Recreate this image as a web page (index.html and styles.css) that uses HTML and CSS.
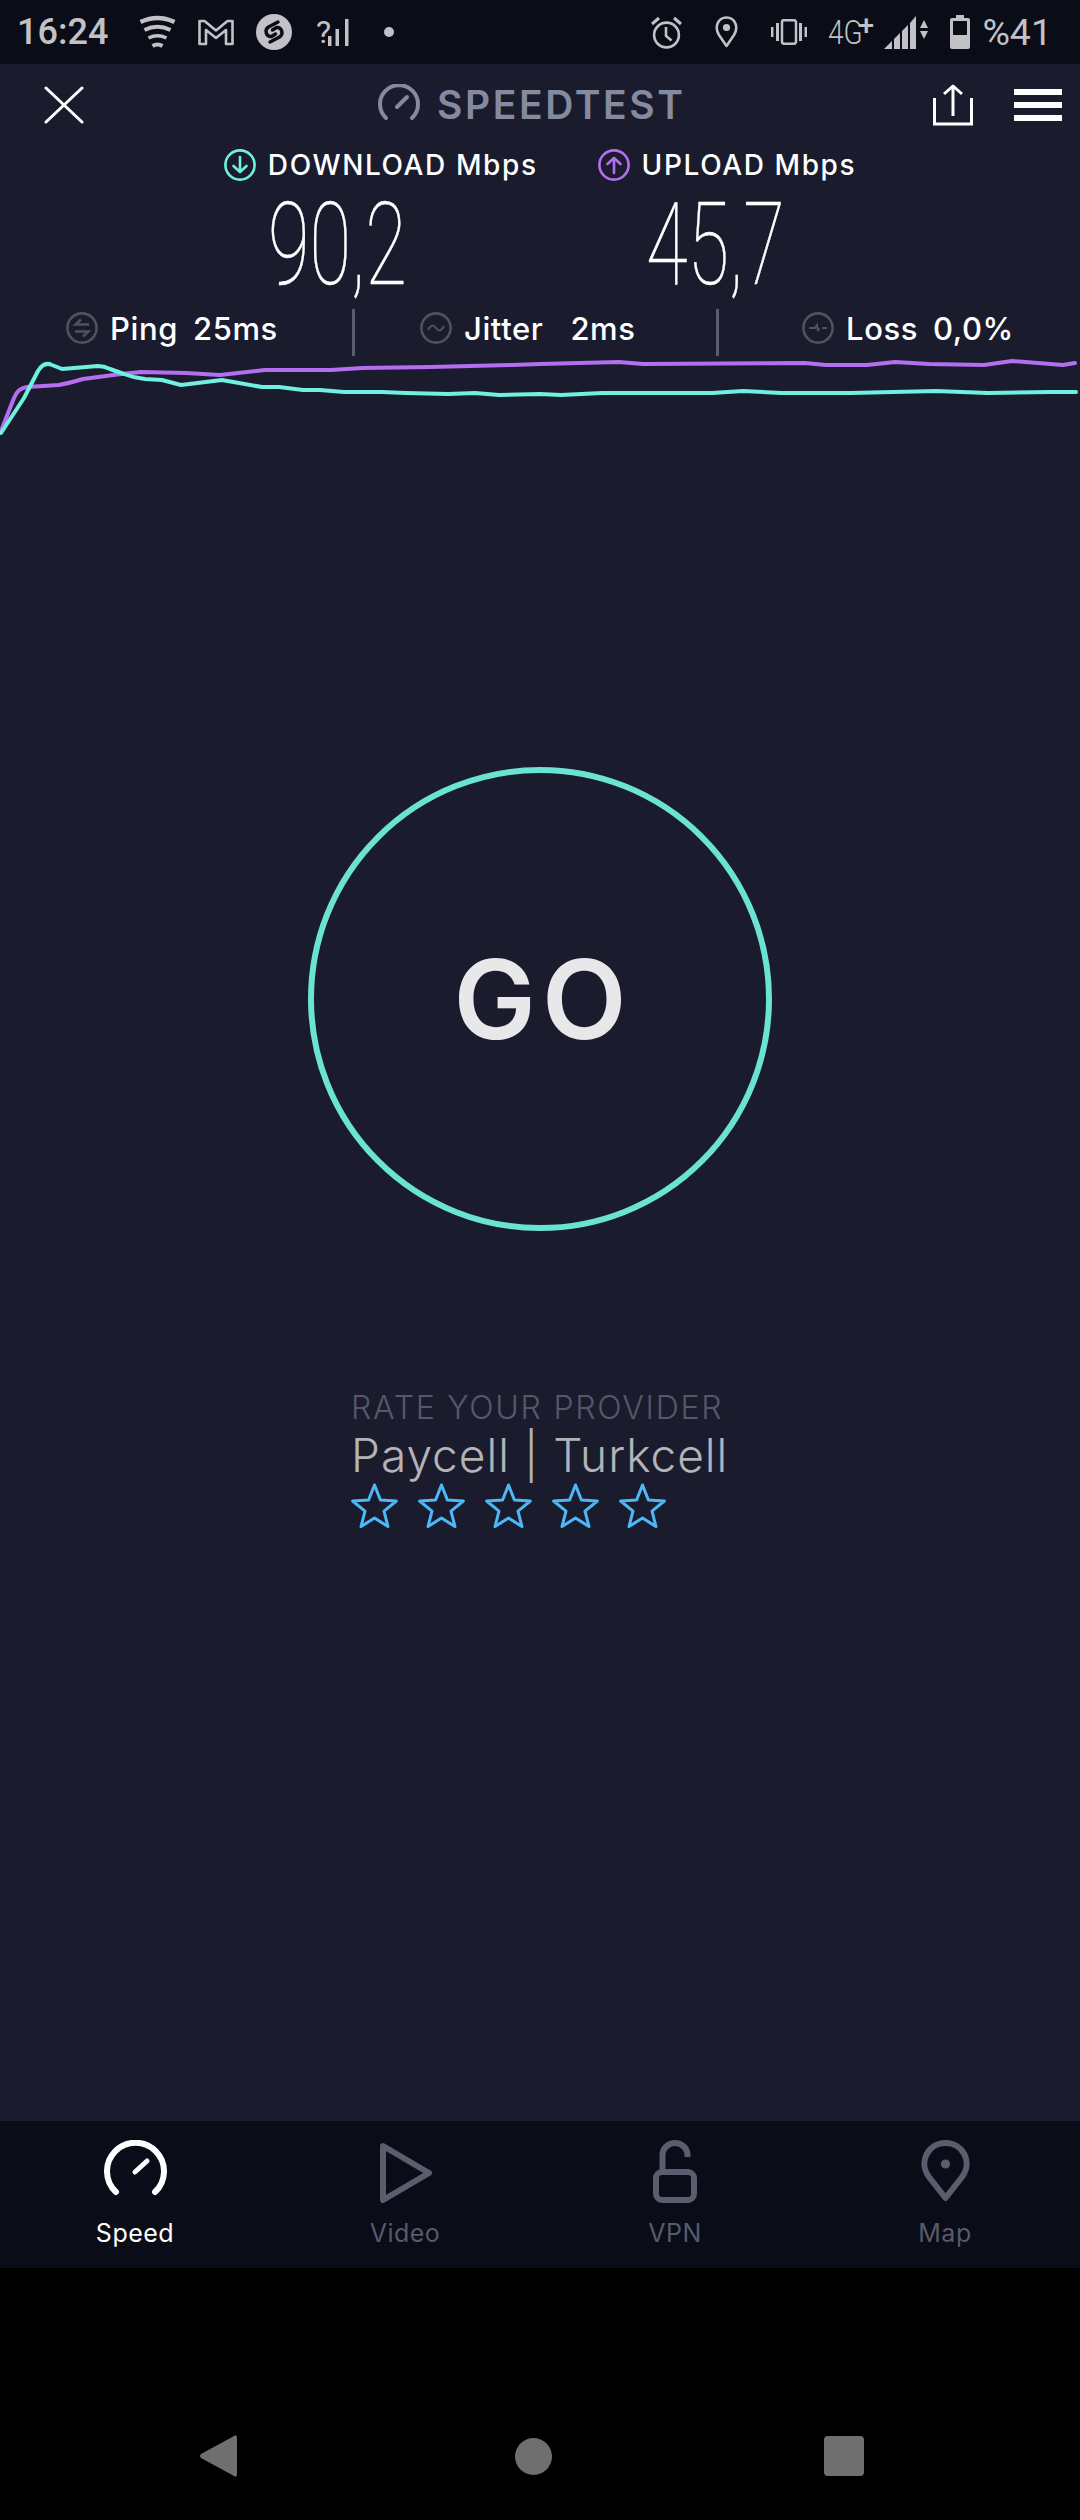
FILE: index.html
```html
<!DOCTYPE html>
<html lang="en">

<head>
  <meta charset="UTF-8" />
  <meta name="viewport" content="width=device-width, initial-scale=1.0" />
  <title>Speedtest</title>
  <link rel="stylesheet" href="styles.css">
</head>

<body>

  <svg class="defs" width="0" height="0">
    <symbol id="star" viewBox="0 0 47 46">
      <polygon points="23.5,2 29.4,17 45.4,18 33,28.1 37,43.6 23.5,35 10,43.6 14,28.1 1.6,18 17.6,17" fill="none" stroke="#4db8f7" stroke-width="3" stroke-linejoin="round" />
    </symbol>
  </svg>

  <div class="status-bar">
    <div class="status-left">
      <span class="clock">16:24</span>
      <svg class="wifi" width="37" height="35" viewBox="0 0 37 35" fill="none" stroke="#c2c2c6" stroke-linecap="butt">
        <path d="M1.5 7 Q18.5 -1 35.5 7" stroke-width="4.5" />
        <path d="M5.5 15 Q18.5 8.5 31.5 15" stroke-width="4" />
        <path d="M9.5 23 Q18.5 18.5 27.5 23" stroke-width="3.5" />
        <path d="M13.5 31 Q18.5 28 23.5 31" stroke-width="4" />
      </svg>
      <svg class="mail" width="36" height="27" viewBox="0 0 36 27" fill="none" stroke="#c2c2c6" stroke-width="2.6" stroke-linejoin="round">
        <path d="M1.5 2 H6.5 L18 11.5 L29.5 2 H34.5 V25 H28 V11 L18 19 L8 11 V25 H1.5 Z" />
      </svg>
      <svg class="shazam" width="36" height="36" viewBox="0 0 36 36" fill="none">
        <circle cx="18" cy="18" r="18" fill="#c2c2c6" />
        <path d="M22 8 L12.5 13 C8 16 10 23 15.5 22.5 L19.5 20 M14 28 L23.5 23 C28 20 26 13 20.5 13.5 L16.5 16" stroke="#0a0c17" stroke-width="3.4" stroke-linecap="round" />
      </svg>
      <span class="no-signal">
        <span class="no-signal-mark">?</span>
        <svg width="22" height="27" viewBox="0 0 22 27" fill="#c2c2c6">
          <rect x="1" y="17" width="3.5" height="10" />
          <rect x="8.5" y="10" width="3.5" height="17" />
          <rect x="18" y="0" width="3.5" height="27" />
        </svg>
      </span>
      <span class="dot"></span>
    </div>
    <div class="status-right">
      <svg class="alarm" width="31" height="33" viewBox="0 0 31 33" fill="none" stroke="#c2c2c6" stroke-width="2.6">
        <circle cx="15.5" cy="19" r="12.4" />
        <path d="M15 11 V20 L20.5 24.5" />
        <path d="M1 8 L8 2 M30 8 L23 2" stroke-width="3" />
      </svg>
      <svg class="place" width="23" height="32" viewBox="0 0 23 32" fill="none" stroke="#c2c2c6" stroke-width="2.6">
        <path d="M11.5 30 L4 19 C-1 11 3 1.5 11.5 1.5 C20 1.5 24 11 19 19 Z" stroke-linejoin="round" />
        <circle cx="11.5" cy="11.5" r="3.6" fill="#c2c2c6" stroke="none" />
      </svg>
      <svg class="vibrate" width="36" height="26" viewBox="0 0 36 26" fill="#c2c2c6">
        <rect x="11" y="1.2" width="14" height="23.6" rx="2" fill="none" stroke="#c2c2c6" stroke-width="2.5" />
        <rect x="0" y="8" width="2.5" height="10" />
        <rect x="5" y="4" width="3" height="18" />
        <rect x="28" y="4" width="3" height="18" />
        <rect x="33.5" y="8" width="2.5" height="10" />
      </svg>
      <span class="network"><span class="network-text">4G</span><span class="network-plus">+</span></span>
      <svg class="signal" width="45" height="33" viewBox="0 0 45 33" fill="#c2c2c6">
        <polygon points="0,33 8,25 8,33" />
        <polygon points="10,23 16,17 16,33 10,33" />
        <polygon points="18,15 24,9 24,33 18,33" />
        <polygon points="26,7 32,0 32,33 26,33" />
        <polygon points="36,12 40,4 44,12" />
        <polygon points="36,15 44,15 40,23" />
      </svg>
      <svg class="battery" width="20" height="34" viewBox="0 0 20 34" fill="none">
        <path d="M6 0 H14 V3 H18 Q20 3 20 5 V32 Q20 34 18 34 H2 Q0 34 0 32 V5 Q0 3 2 3 H6 Z" fill="#c2c2c6" />
        <rect x="3" y="6" width="14" height="14" fill="#0a0c17" />
      </svg>
      <span class="percent">%41</span>
    </div>
  </div>

  <div class="app">
    <div class="top-bar">
      <svg class="close" width="40" height="38" viewBox="0 0 40 38" fill="none" stroke="#fff" stroke-width="3" stroke-linecap="round">
        <path d="M2 2 L38 36 M38 2 L2 36" />
      </svg>
      <div class="brand">
        <svg width="42" height="36" viewBox="0 0 42 36" fill="none" stroke="#868a9f" stroke-width="4" stroke-linecap="round">
          <path d="M8 34 A19 19 0 1 1 34 34" />
          <path d="M19 23 L29 13" />
        </svg>
        <span class="brand-name">SPEEDTEST</span>
      </div>
      <div class="top-actions">
        <svg class="share" width="40" height="42" viewBox="0 0 40 42" fill="none" stroke="#fff" stroke-width="3">
          <path d="M1.5 14 V40 H38.5 V14" />
          <path d="M20 32 V2 M11 10 L20 2 L29 10" stroke-linejoin="round" />
        </svg>
        <div class="menu"><span></span><span></span><span></span></div>
      </div>
    </div>

    <div class="speed-labels">
      <div class="speed-label">
        <svg width="32" height="32" viewBox="0 0 32 32" fill="none" stroke="#6ff0e0" stroke-width="2.6" stroke-linecap="round" stroke-linejoin="round">
          <circle cx="16" cy="16" r="14.6" />
          <path d="M16 8 V23 M9.5 17 L16 23 L22.5 17" />
        </svg>
        <span>DOWNLOAD Mbps</span>
      </div>
      <div class="speed-label">
        <svg width="32" height="32" viewBox="0 0 32 32" fill="none" stroke="#b46ef0" stroke-width="2.6" stroke-linecap="round" stroke-linejoin="round">
          <circle cx="16" cy="16" r="14.6" />
          <path d="M16 24 V9 M9.5 15 L16 9 L22.5 15" />
        </svg>
        <span>UPLOAD Mbps</span>
      </div>
    </div>

    <div class="speed-values">
      <span class="speed-value">90,2</span>
      <span class="speed-value">45,7</span>
    </div>

    <div class="stats">
      <div class="stat stat-ping">
        <svg width="32" height="32" viewBox="0 0 32 32" fill="none" stroke="#50525f" stroke-width="2.6">
          <circle cx="16" cy="16" r="14.6" />
          <path d="M23 12.5 H9.5 L15 7.5 M9 19.5 H22.5 L17 24.5" stroke-width="2.4" />
        </svg>
        <span class="stat-name">Ping</span>
        <span>25ms</span>
      </div>
      <div class="stat stat-jitter">
        <svg width="32" height="32" viewBox="0 0 32 32" fill="none" stroke="#50525f" stroke-width="2.6">
          <circle cx="16" cy="16" r="14.6" />
          <path d="M8 18 C11 12 14 13 16 16 C18 19 21 20 24 14" stroke-width="2" />
        </svg>
        <span class="stat-name">Jitter</span>
        <span>2ms</span>
      </div>
      <div class="stat stat-loss">
        <svg width="32" height="32" viewBox="0 0 32 32" fill="none" stroke="#50525f" stroke-width="2.6">
          <circle cx="16" cy="16" r="14.6" />
          <path d="M7 16 H13 L15 13 L16 19 L17 16 M20 16 H25" stroke-width="2" />
        </svg>
        <span class="stat-name">Loss</span>
        <span>0,0%</span>
      </div>
    </div>

    <!-- speed history, one line per direction -->
    <svg class="chart" width="1080" height="85" viewBox="0 355 1080 85" fill="none" stroke-width="4" stroke-linejoin="round" stroke-linecap="round">
      <path stroke="#b46ef0" d="M1 430 L14 397 Q18 387 27 386 L59 384 Q70 382 83 378 L121 373 L141 371 L186 372 L220 374 L265 369 L331 369 L362 367 L430 366 L513 364 L540 363 L619 361 L643 363 L805 362 L826 364 L867 364 L895 361 L929 363 L984 364 L1012 360 L1063 364 L1075 362" />
      <path stroke="#6ff0e0" d="M1 432 L24 397 L38 370 Q44 360 52 364 L62 368 L98 365 Q104 365 110 368 L124 373 Q134 377 145 378 L162 379 L181 384 L222 379 L262 386 L279 386 L303 389 L320 389 L344 391 L382 391 L406 392 L448 393 L475 392 L499 394 L540 393 L561 394 L602 392 L712 392 L743 390 L781 392 L850 392 L936 390 L988 392 L1050 391 L1076 391" />
    </svg>

    <div class="content">
      <div class="go-button">GO</div>

      <div class="rate">
        <div class="rate-title">RATE YOUR PROVIDER</div>
        <div class="rate-provider">Paycell | Turkcell</div>
        <div class="stars">
          <svg width="47" height="46"><use href="#star" /></svg>
          <svg width="47" height="46"><use href="#star" /></svg>
          <svg width="47" height="46"><use href="#star" /></svg>
          <svg width="47" height="46"><use href="#star" /></svg>
          <svg width="47" height="46"><use href="#star" /></svg>
        </div>
      </div>
    </div>

    <div class="tabs">
      <div class="tab tab-active">
        <svg width="63" height="63" viewBox="0 0 63 63" fill="none" stroke="#fff" stroke-width="6" stroke-linecap="round">
          <path d="M12 52 A28.5 28.5 0 1 1 51 52" />
          <path d="M31 32 L43 21" stroke-width="5" />
        </svg>
        <span>Speed</span>
      </div>
      <div class="tab">
        <svg width="53" height="63" viewBox="0 0 53 63" fill="none" stroke="#5b5d6e" stroke-width="6" stroke-linejoin="round">
          <path d="M4 6 L50 33 L4 60 Z" />
        </svg>
        <span>Video</span>
      </div>
      <div class="tab">
        <svg width="44" height="63" viewBox="0 0 44 63" fill="none" stroke="#5b5d6e" stroke-width="6">
          <rect x="3" y="32" width="38" height="28" rx="6" />
          <path d="M9.5 32 V15 A12.5 12 0 0 1 34.5 15 V17" />
        </svg>
        <span>VPN</span>
      </div>
      <div class="tab">
        <svg width="49" height="63" viewBox="0 0 49 63" fill="none" stroke="#5b5d6e" stroke-width="6">
          <path d="M24.5 58 L8 37 C-3 22 7 3 24.5 3 C42 3 52 22 41 37 Z" stroke-linejoin="round" />
          <circle cx="24.5" cy="24" r="4.6" fill="#5b5d6e" stroke="none" />
        </svg>
        <span>Map</span>
      </div>
    </div>
  </div>

  <div class="nav-bar">
    <svg width="37" height="42" viewBox="0 0 37 42" fill="#6f6f6f">
      <path d="M34 1 Q37 -1 37 3 V39 Q37 43 34 41 L1 23 Q-1 21 1 19 Z" />
    </svg>
    <span class="nav-home"></span>
    <span class="nav-recent"></span>
  </div>

</body>

</html>
```

FILE: styles.css
```css
* {
  box-sizing: border-box;
}

body {
  margin: 0;
  width: 1080px;
  height: 2520px;
  overflow: hidden;
  display: flex;
  flex-direction: column;
  background-color: #000;
  color: #fff;
  font-family: Inter, "Liberation Sans", sans-serif;
}

svg {
  display: block;
  flex-shrink: 0;
}

.defs {
  position: absolute;
}

/* status bar */
.status-bar {
  height: 64px;
  flex-shrink: 0;
  display: flex;
  justify-content: space-between;
  align-items: center;
  padding: 0 28px 0 17px;
  background-color: #0a0c17;
  color: #c2c2c6;
  font-family: Roboto, sans-serif;
}

.status-left,
.status-right {
  display: flex;
  align-items: center;
}

.clock {
  width: 93px;
  font-size: 36px;
  font-weight: 500;
  margin-right: 29px;
}

.wifi {
  margin-right: 22px;
}

.mail {
  margin-right: 22px;
}

.shazam {
  margin-right: 24px;
}

.no-signal {
  width: 33px;
  height: 27px;
  display: flex;
  justify-content: space-between;
  align-items: center;
  margin-right: 35px;
}

.no-signal-mark {
  font-size: 32px;
  line-height: 27px;
  width: 11px;
}

.dot {
  width: 10px;
  height: 10px;
  border-radius: 50%;
  background-color: #c2c2c6;
}

.alarm,
.place {
  margin-right: 33px;
}

.vibrate {
  margin-right: 21px;
}

.network {
  width: 49px;
  margin-right: 7px;
  display: flex;
  align-items: flex-start;
  line-height: 36px;
}

.network-text {
  width: 30px;
  font-size: 34px;
  font-weight: 300;
  transform: scaleX(0.82);
  transform-origin: left;
}

.network-plus {
  font-size: 28px;
  line-height: 24px;
  font-weight: 500;
}

.signal {
  margin-right: 21px;
}

.battery {
  margin-right: 12px;
}

.percent {
  font-size: 37.5px;
  font-weight: 400;
}

/* speedtest screen */
.app {
  flex: 1;
  display: flex;
  flex-direction: column;
  background-color: #1a1c2e;
}

.top-bar {
  height: 78px;
  flex-shrink: 0;
  display: flex;
  padding: 20px 18px 0 44px;
}

.close {
  margin-top: 2px;
}

.brand {
  height: 36px;
  margin-left: 294px;
  display: flex;
  align-items: center;
  gap: 17px;
  color: #868a9f;
}

.brand-name {
  font-size: 39px;
  font-weight: 600;
  line-height: 36px;
  letter-spacing: 2.6px;
  margin-top: 6px;
}

.top-actions {
  margin-left: auto;
  display: flex;
  gap: 41px;
}

.menu {
  width: 48px;
  height: 32px;
  margin-top: 5px;
  display: flex;
  flex-direction: column;
  justify-content: space-between;
}

.menu span {
  height: 6px;
  background-color: #fff;
}

.speed-labels {
  display: flex;
  justify-content: center;
  gap: 60px;
  padding-top: 7px;
}

.speed-label {
  display: flex;
  align-items: center;
  gap: 12px;
  font-size: 28px;
  font-weight: 500;
  line-height: 32px;
  letter-spacing: 1.6px;
}

.speed-values {
  display: grid;
  grid-template-columns: 378px auto;
  padding: 2px 0 0 268px;
  height: 128px;
}

.speed-value {
  font-family: Roboto, sans-serif;
  font-size: 115px;
  font-weight: 100;
  line-height: 124px;
  -webkit-text-stroke: 0.5px #fff;
  transform: scaleX(0.66);
  transform-origin: left;
}

.stats {
  display: grid;
  grid-template-columns: 352px 364px 364px;
  height: 47px;
  flex-shrink: 0;
}

.stat {
  display: flex;
  align-items: center;
  font-size: 31px;
  font-weight: 500;
  letter-spacing: 0.6px;
  padding-bottom: 9px;
}

.stat svg {
  margin-right: 12px;
}

.stat-name {
  margin-right: 15px;
}

.stat-ping {
  padding-left: 66px;
}

.stat-jitter,
.stat-loss {
  border-left: 3px solid #5b5d6e;
}

.stat-jitter {
  padding-left: 65px;
}

.stat-jitter .stat-name {
  margin-right: 27px;
}

.stat-loss {
  padding-left: 83px;
}

.chart {
  flex-shrink: 0;
}

.content {
  flex: 1;
  display: flex;
  flex-direction: column;
  align-items: center;
}

.go-button {
  width: 464px;
  height: 464px;
  margin-top: 326px;
  padding-left: 6px;
  border: 6px solid #6ae3d2;
  border-radius: 50%;
  display: flex;
  justify-content: center;
  align-items: center;
  color: #e8e8ea;
  font-size: 110px;
  font-weight: 600;
  letter-spacing: 6px;
}

.rate {
  width: 378px;
  margin-top: 158px;
}

.rate-title {
  font-size: 32px;
  font-weight: 300;
  line-height: 38px;
  letter-spacing: 1.75px;
  color: #55586a;
  white-space: nowrap;
}

.rate-provider {
  font-size: 46px;
  font-weight: 300;
  line-height: 56px;
  letter-spacing: 1px;
  color: #b4b4b8;
  white-space: nowrap;
}

.stars {
  display: flex;
  gap: 20px;
}

/* bottom tabs */
.tabs {
  height: 147px;
  flex-shrink: 0;
  display: grid;
  grid-template-columns: repeat(4, 270px);
  background-color: #0a0c17;
}

.tab {
  display: flex;
  flex-direction: column;
  align-items: center;
  padding-top: 19px;
  color: #575a6b;
  font-size: 25px;
  line-height: 30px;
  letter-spacing: 0.5px;
}

.tab span {
  margin-top: 15px;
}

.tab-active {
  color: #fff;
}

/* android navigation */
.nav-bar {
  height: 252px;
  flex-shrink: 0;
  display: flex;
  align-items: center;
  padding: 124px 216px 0 200px;
  justify-content: space-between;
}

.nav-home {
  width: 37px;
  height: 37px;
  margin-left: 5px;
  border-radius: 50%;
  background-color: #6f6f6f;
}

.nav-recent {
  width: 40px;
  height: 40px;
  border-radius: 4px;
  background-color: #6f6f6f;
}
```
